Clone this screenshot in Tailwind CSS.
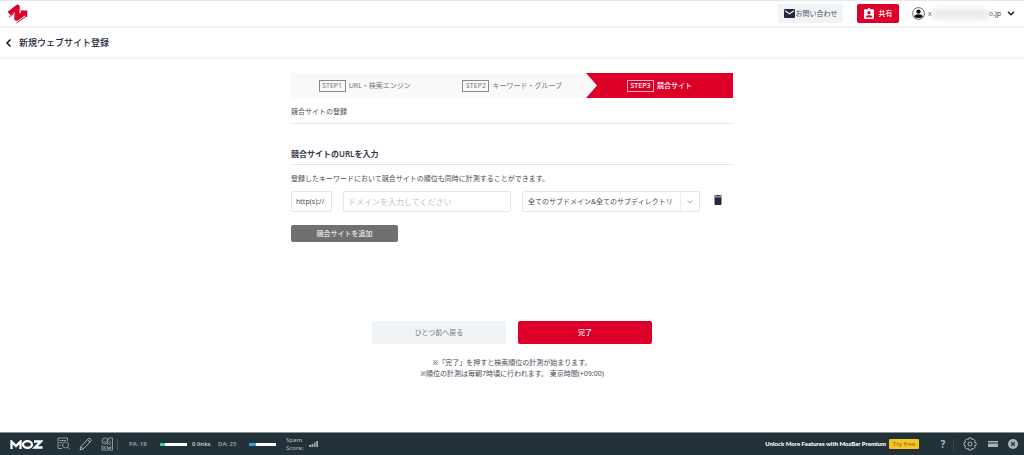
<!DOCTYPE html>
<html lang="ja">
<head>
<meta charset="utf-8">
<meta name="viewport" content="width=device-width, initial-scale=1">
<title>新規ウェブサイト登録</title>
<script src="https://cdn.jsdelivr.net/npm/@tailwindcss/browser@4"></script>
</head>
<body class="flex min-h-screen flex-col bg-white font-['Noto_Sans','Noto_Sans_CJK_JP',sans-serif] text-[7px] leading-[11px] text-[#4a4c58]">
<header class="flex h-[28px] items-center border-t border-b-2 border-t-[#e8e8e8] border-b-[#f4f4f4] pr-[9px] pl-[7px]">
  <a href="#" aria-label="ホーム">
    <svg class="h-[20px] w-[21px]" viewBox="0 0 21 20"><path d="M2 9.500 10.500 3 9.500 14.500 18 8.500" fill="none" stroke="#dc0028" stroke-width="4.600" stroke-linejoin="round"/><path d="M13 6.500 20.500 6.500 20 13.500Z" fill="#dc0028"/><path d="M1.800 13.200 7 9.500M9.500 18.800 19.500 12" fill="none" stroke="#dc0028" stroke-width="1"/></svg>
  </a>
  <div class="ml-auto flex items-center">
    <button class="flex h-[19px] w-[65px] items-center justify-center gap-px rounded-[2px] bg-[#f0f4f7]">
      <svg class="h-[9px] w-[11px]" viewBox="0 0 11 9"><rect width="11" height="9" rx="1" fill="#24283e"/><path d="M1 1.800 5.500 4.800 10 1.800" fill="none" stroke="#f0f4f7" stroke-width="1.100"/></svg>
      <span>お問い合わせ</span>
    </button>
    <button class="ml-[14px] flex h-[19px] w-[42px] items-center justify-center gap-[5px] rounded-[2px] bg-[#dc0028] font-medium text-white">
      <svg class="h-[11px] w-[10px]" viewBox="0 0 10 11"><path fill="#fff" d="M1 1.300h2.700a1.300 1.300 0 0 1 2.600 0H9q1 0 1 1V10q0 1-1 1H1q-1 0-1-1V2.300q0-1 1-1Z"/><circle cx="5" cy="4.700" r="1.600" fill="#dc0028"/><path fill="#dc0028" d="M2 9.500V8.600C2 6.700 8 6.700 8 8.600v.9Z"/></svg>
      <span>共有</span>
    </button>
    <button class="ml-[13px] flex items-center">
      <svg class="h-[13px] w-[13px]" viewBox="0 0 13 13"><circle cx="6.500" cy="6.500" r="5.900" fill="#fff" stroke="#555" stroke-width=".9"/><circle cx="6.500" cy="4.600" r="2.200" fill="#111"/><path fill="#111" d="M2.200 9.500C2.500 6.500 10.500 6.500 10.800 9.500 9 11.500 4 11.500 2.200 9.500Z"/></svg>
      <span class="ml-[3px]">x</span>
      <span class="h-[10px] w-[57px] bg-[#e8e8e8] blur-[3px]"></span>
      <span>o.jp</span>
      <svg class="ml-[6px] h-[5px] w-[8px]" viewBox="0 0 8 5" fill="none" stroke="#222" stroke-width="1.500"><path d="M1 .8 4 3.800 7 .8"/></svg>
    </button>
  </div>
</header>
<div class="flex h-[31px] items-center gap-[8px] border-b-2 border-[#f4f4f4] pl-[6px]">
  <a href="#" aria-label="戻る"><svg class="h-[8px] w-[5px]" viewBox="0 0 5 8" fill="none" stroke="#111" stroke-width="1.500"><path d="M4.500 .5 1 4 4.500 7.500"/></svg></a>
  <h1 class="text-[9px] leading-[12px] font-medium text-[#24283e]">新規ウェブサイト登録</h1>
</div>

<main class="mx-auto w-full max-w-[442px] pt-[14px]">
  <ol class="flex h-[25px] bg-[#f9f9f9] text-[#777]">
    <li class="flex flex-1 items-center justify-center gap-[3px]"><span class="flex h-[12px] w-[27px] items-center justify-center border border-[#888]">STEP1</span><span>URL・検索エンジン</span></li>
    <li class="flex flex-1 items-center justify-center gap-[3px]"><span class="flex h-[12px] w-[27px] items-center justify-center border border-[#888]">STEP2</span><span>キーワード・グループ</span></li>
    <li class="flex w-[147px] items-center justify-center gap-[3px] bg-[#dc0028] font-medium text-white [clip-path:polygon(0_0,100%_0,100%_100%,0_100%,11px_50%)]"><span class="flex h-[12px] w-[27px] items-center justify-center border border-white/70">STEP3</span><span>競合サイト</span></li>
  </ol>
  <h2 class="border-b border-[#e9e9e9] pt-[8px] pb-[6px]">競合サイトの登録</h2>
  <h3 class="border-b border-[#e4e4e4] pt-[24px] pb-[4px] text-[8px] leading-[12px] font-semibold text-[#34364a]">競合サイトのURLを入力</h3>
  <p class="mt-[8px]">登録したキーワードにおいて競合サイトの順位も同時に計測することができます。</p>
  <div class="mt-[7px] flex items-center">
    <span class="flex h-[21px] w-[41px] items-center rounded-[2px] border border-[#e6e6e6] pl-[4px]">http(s)://</span>
    <input type="text" aria-label="ドメイン" placeholder="ドメインを入力してください" class="ml-[11px] h-[21px] min-w-0 flex-1 rounded-[2px] border border-[#e6e6e6] px-[4px] text-[8px] placeholder:text-[#c4c4c8]">
    <div class="relative ml-[11px] h-[21px] w-[178px]">
      <select aria-label="対象範囲" class="h-full w-full appearance-none rounded-[2px] border border-[#e6e6e6] bg-white pl-[5px] pr-[20px] text-[7px]"><option>全てのサブドメイン&amp;全てのサブディレクトリ</option></select>
      <span class="pointer-events-none absolute inset-y-px right-px flex w-[19px] items-center justify-center border-l border-[#ececec]"><svg class="h-[4px] w-[6px]" viewBox="0 0 6 4" fill="none" stroke="#aaa"><path d="M.5 .5 3 3 5.500 .5"/></svg></span>
    </div>
    <button aria-label="削除" class="mr-[11px] mb-[3px] ml-[14px]"><svg class="h-[10px] w-[8px]" viewBox="0 0 8 10" fill="#24283e"><path d="M0 .6H2.300L2.800 0H5.200L5.700 .6H8V1.600H0ZM.5 2.200H7.500V9Q7.500 10 6.500 10H1.500Q.5 10 .5 9Z"/></svg></button>
  </div>
  <button class="mt-[13px] flex h-[17px] w-[107px] items-center justify-center rounded-[2px] bg-[#707070] text-white">競合サイトを追加</button>
  <div class="mt-[79px] flex justify-center gap-[12px]">
    <button class="h-[23px] w-[134px] rounded-[2px] bg-[#f0f4f7] text-[#777]">ひとつ前へ戻る</button>
    <button class="h-[23px] w-[134px] rounded-[2px] bg-[#dc0028] font-medium text-white">完了</button>
  </div>
  <p class="mt-[13px] mb-[13px] text-center">※「完了」を押すと検索順位の計測が始まります。<br>※順位の計測は毎朝7時頃に行われます。 東京時間(+09:00)</p>
</main>

<footer class="mt-auto flex h-[23px] items-center border-t border-[#8a9193] bg-[#233238] pr-[6px] pl-[10px] font-['Open_Sans',sans-serif] text-[6px] leading-[8px] font-semibold text-[#a4acae]">
  <svg class="h-[9px] w-[33px]" role="img" aria-label="MOZ" viewBox="0 0 33 9" fill="none" stroke="#fff" stroke-width="2.300"><path d="M1.500 9V1.500L6 6 10.500 1.500V9M24 1.500H31L24.800 7.500H32.500"/><ellipse cx="17.500" cy="4.500" rx="4.500" ry="3.300"/></svg>
  <button aria-label="ページ分析" class="ml-[14px]"><svg class="h-[14px] w-[14px]" viewBox="0 0 14 14" fill="none" stroke="#8b979b"><path d="M5 11.500H1V1H10.500V4M2.500 3.500H9M2.500 5.500H5M2.500 8H4"/><circle cx="8.500" cy="8" r="3"/><path d="M10.700 10.200 13 12.500"/></svg></button>
  <button aria-label="ハイライト" class="ml-[8px]"><svg class="h-[14px] w-[13px]" viewBox="0 0 13 14" fill="none" stroke="#aab2b4"><path d="M1 13 2 9.500 9.500 1.500Q11 .8 12 2.500 12.500 3.500 11.800 4.200L4.300 12ZM2 9.500 4.300 12M8.500 2.800 11 5"/></svg></button>
  <button aria-label="キーワード" class="ml-[9px]"><svg class="h-[14px] w-[12px]" viewBox="0 0 12 14" fill="none" stroke="#8b979b"><path d="M7 1H11.500V13H1V8"/><circle cx="4" cy="4" r="3"/><path d="M2.500 4 4 5.500 8 2M8 5H10M6 7H10M3 9V12M5 9 3.500 10.500 5 12M6 9 7 12 8 10 9 12 10 9"/></svg></button>
  <span class="ml-[4px] h-[11px] w-px bg-[#4b585d]"></span>
  <span class="ml-[11px] w-[31px]">PA: 18</span>
  <span class="flex h-[3px] w-[27px] bg-white"><span class="w-[5px] bg-[#3cc8aa]"></span></span>
  <span class="ml-[5px] w-[26px] text-[#d4d8da]">0 links</span>
  <span class="w-[31px]">DA: 25</span>
  <span class="flex h-[3px] w-[27px] bg-white"><span class="w-[7px] bg-[#30a5dd]"></span></span>
  <span class="ml-[10px] w-[23px]">Spam<br>Score:</span>
  <svg class="h-[6px] w-[9px]" viewBox="0 0 9 6" fill="#a4acae"><path d="M0 4H2V6H0ZM2.500 3H4.300V6H2.500ZM5 1.500H6.500V6H5ZM7.200 0H9V6H7.200Z"/></svg>
  <span class="ml-auto font-['Lato',sans-serif] font-black text-white">Unlock More Features with MozBar Premium</span>
  <button class="ml-[3px] h-[10px] w-[30px] rounded-[1px] bg-[#f6c522] text-[#8d7520]">Try free</button>
  <button class="ml-[20px] w-[8px] text-[10px] leading-[10px] font-bold text-[#b5bcbe]" aria-label="ヘルプ">?</button>
  <span class="ml-[6px] h-[11px] w-px bg-[#3a494e]"></span>
  <button aria-label="設定" class="ml-[9px]"><svg class="h-[14px] w-[14px]" viewBox="0 0 14 14" fill="none" stroke="#aab2b4"><path d="M5.700 1H8.300L8.800 2.600 10.300 1.900 12.100 3.700 11.400 5.200 13 5.700V8.300L11.400 8.800 12.100 10.300 10.300 12.100 8.800 11.400 8.300 13H5.700L5.200 11.400 3.700 12.100 1.900 10.300 2.600 8.800 1 8.300V5.700L2.600 5.200 1.900 3.700 3.700 1.900 5.200 2.600Z"/><circle cx="7" cy="7" r="2"/></svg></button>
  <button aria-label="表示位置" class="ml-[11px]"><svg class="h-[6px] w-[10px]" viewBox="0 0 10 6" fill="#aab2b4"><path d="M0 0H10V1.500H0ZM0 2.500H10V6H0Z"/></svg></button>
  <button aria-label="閉じる" class="ml-[10px]"><svg class="h-[10px] w-[10px]" viewBox="0 0 10 10"><circle cx="5" cy="5" r="5" fill="#aab2b4"/><path d="M3.200 3.200 6.800 6.800M6.800 3.200 3.200 6.800" stroke="#233238" stroke-width="1.400"/></svg></button>
</footer>
</body>
</html>
